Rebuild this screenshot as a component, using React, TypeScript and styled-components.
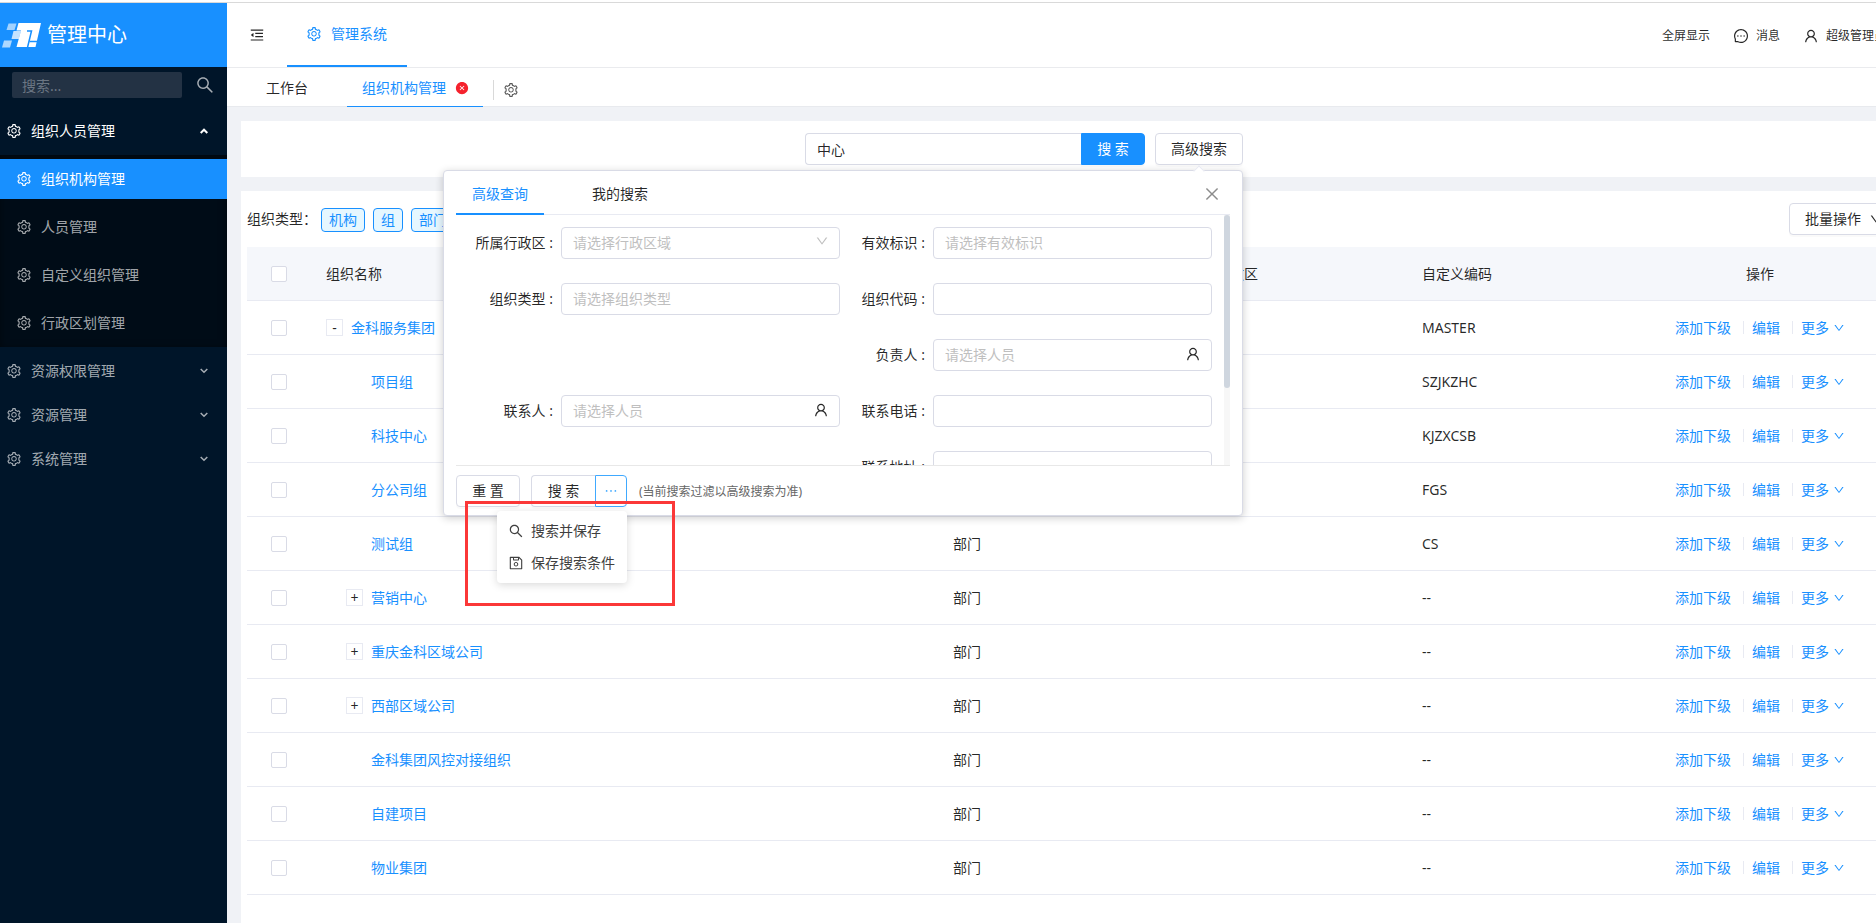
import React from "react";
import styled, { createGlobalStyle, css } from "styled-components";
import {
  AiFillCloseCircle,
  AiOutlineClose,
  AiOutlineDown,
  AiOutlineEllipsis,
  AiOutlineMenuFold,
  AiOutlineMessage,
  AiOutlineSave,
  AiOutlineSearch,
  AiOutlineSetting,
  AiOutlineUser,
} from "react-icons/ai";

const blue = "#1890ff";
const line = "#e8eaf2";
const fieldBorder = "#d9dbe6";

const GlobalStyle = createGlobalStyle`
  *, *::before, *::after { box-sizing: border-box; }
  body {
    margin: 0;
    background: #fff;
    color: rgba(0, 0, 0, 0.85);
    font: 14px/22px "Noto Sans", "Noto Sans CJK SC", sans-serif;
  }
  button, input, select { font: inherit; color: inherit; margin: 0; }
  button { cursor: pointer; }
  a { color: ${blue}; text-decoration: none; }
  svg { display: block; flex: none; }
`;

const Viewport = styled.div`
  overflow: hidden;
`;

const Shell = styled.div`
  display: flex;
  width: calc(100% + 38px);
  min-height: 100vh;
  padding-top: 2px;
`;

/* ---------- sidebar ---------- */

const Sidebar = styled.aside`
  flex: none;
  width: 227px;
  border-top: 1px solid #d9d9d9;
  background: #001529;
  color: rgba(255, 255, 255, 0.65);
`;

const Brand = styled.div`
  display: flex;
  align-items: center;
  gap: 6px;
  height: 64px;
  padding-left: 2px;
  background: ${blue};
  color: #fff;
  font-size: 20px;
  line-height: 64px;
`;

const SideSearch = styled.form`
  display: flex;
  align-items: center;
  gap: 13px;
  height: 40px;
  padding: 0 12px 4px;
`;

const SideInput = styled.input`
  width: 170px;
  height: 26px;
  padding: 0 10px;
  border: 0;
  border-radius: 2px;
  background: #233244;
  outline: 0;
  &::placeholder { color: #6b7683; opacity: 1; }
`;

const IconButton = styled.button`
  display: flex;
  align-items: center;
  padding: 0;
  border: 0;
  background: none;
  color: inherit;
`;

const NavItem = styled.button<{ $nested?: boolean; $active?: boolean; $open?: boolean }>`
  display: flex;
  align-items: center;
  gap: 9px;
  width: 100%;
  height: 40px;
  margin: 4px 0;
  padding: 0 19px 0 ${(p) => (p.$nested ? 16 : 6)}px;
  border: 0;
  background: ${(p) => (p.$active ? blue : "transparent")};
  color: ${(p) => (p.$active || p.$open ? "#fff" : "inherit")};
  text-align: left;
  & > span { flex: 1; }
`;

const NavList = styled.nav`
  display: flex;
  flex-direction: column;
  & > ${NavItem} + ${NavItem} { margin-top: 0; }
`;

const SubMenu = styled.div`
  display: flex;
  flex-direction: column;
  background: #000c17;
  box-shadow: inset 0 2px 8px rgba(0, 0, 0, 0.45);
`;

/* ---------- header ---------- */

const Main = styled.main`
  flex: 1;
  min-width: 0;
  display: flex;
  flex-direction: column;
  border-top: 1px solid #d9d9d9;
  background: #f0f2f6;
`;

const Header = styled.header`
  display: flex;
  height: 65px;
  padding: 0 28px 0 22px;
  border-bottom: 1px solid #eaebee;
  background: #fff;
`;

const AppTab = styled.button`
  display: flex;
  align-items: center;
  gap: 9px;
  width: 120px;
  height: 64px;
  margin-left: 22px;
  padding: 0 19px;
  border: 0;
  border-bottom: 2px solid ${blue};
  background: none;
  color: ${blue};
  white-space: nowrap;
`;

const HeaderTools = styled.div`
  display: flex;
  align-items: center;
  gap: 23px;
  margin-left: auto;
  font-size: 12px;
`;

const HeaderTool = styled.button`
  display: flex;
  align-items: center;
  gap: 7px;
  padding: 2px 0 0;
  border: 0;
  background: none;
`;

const PageTabs = styled.div`
  display: flex;
  height: 39px;
  padding-left: 24px;
  border-bottom: 1px solid #e8eaee;
  background: #fff;
`;

const PageTab = styled.button<{ $active?: boolean }>`
  display: flex;
  align-items: center;
  gap: 9px;
  height: 39px;
  padding: 2px 14px 0 15px;
  border: 0;
  border-bottom: 1px solid ${(p) => (p.$active ? blue : "transparent")};
  background: none;
  color: ${(p) => (p.$active ? blue : "inherit")};
  svg { color: #f5222d; }
  & + & { margin-left: 25px; }
`;

const TabSettings = styled(IconButton)`
  height: 20px;
  margin: 12px 0 0 10px;
  padding-left: 9px;
  border-left: 1px solid #d9d9d9;
  color: #595959;
`;

const Content = styled.div`
  flex: 1;
  display: flex;
  flex-direction: column;
  gap: 14px;
  padding: 14px 9px 0 14px;
`;

/* ---------- buttons and fields ---------- */

const Button = styled.button<{ $primary?: boolean; $join?: "left" | "right"; $focus?: boolean }>`
  display: flex;
  align-items: center;
  justify-content: center;
  gap: 8px;
  min-width: 64px;
  height: 32px;
  padding: 0 15px;
  border: 1px solid ${fieldBorder};
  border-radius: 4px;
  background: #fff;
  white-space: nowrap;
  box-shadow: 0 2px 0 rgba(0, 0, 0, 0.02);
  ${(p) => p.$primary && css`background: ${blue}; border-color: ${blue}; color: #fff;`}
  ${(p) => p.$join === "right" && css`border-radius: 0 4px 4px 0;`}
  ${(p) => p.$join === "left" && css`border-radius: 4px 0 0 4px; border-right: 0;`}
  ${(p) => p.$focus && css`min-width: 32px; padding: 0; border-color: #40a9ff; color: #40a9ff;`}
`;

const fieldBox = css`
  width: 100%;
  height: 32px;
  padding: 0 11px;
  border: 1px solid ${fieldBorder};
  border-radius: 4px;
  background: #fff;
  outline: 0;
`;

const TextInput = styled.input<{ $joined?: boolean }>`
  ${fieldBox}
  ${(p) =>
    p.$joined
      ? css`width: 276px; border-radius: 4px 0 0 4px; border-right: 0;`
      : css`padding-bottom: 2px;`}
  &::placeholder { color: #bfbfbf; opacity: 1; }
`;

const SelectInput = styled.select`
  ${fieldBox}
  appearance: none;
  color: #bfbfbf;
`;

/* ---------- search card ---------- */

const SearchCard = styled.section`
  display: grid;
  grid-template-columns: 564fr auto 662fr;
  height: 56px;
  padding: 12px 0;
  background: #fff;
`;

const SearchForm = styled.div`
  grid-column: 2;
  display: flex;
`;

const AdvancedAnchor = styled.div`
  position: relative;
  z-index: 2;
  margin-left: 10px;
`;

const Popover = styled.div`
  position: absolute;
  top: 37px;
  right: 0;
  width: 800px;
  padding: 0 12px 8px;
  border: 1px solid ${fieldBorder};
  border-radius: 4px;
  background: #fff;
  box-shadow: 0 2px 8px rgba(0, 0, 0, 0.2);
  &::before {
    content: "";
    position: absolute;
    top: -4px;
    right: 39px;
    width: 8px;
    height: 8px;
    border: 1px solid ${line};
    border-width: 1px 0 0 1px;
    background: #fff;
    transform: rotate(45deg);
  }
`;

const PopTabs = styled.div`
  display: flex;
  align-items: center;
  gap: 32px;
  height: 44px;
  border-bottom: 1px solid ${line};
  ${IconButton} { margin: 2px 9px 0 auto; color: #8c8c8c; }
`;

const PopTab = styled.button<{ $active?: boolean }>`
  height: 44px;
  padding: 4px 16px 0;
  border: 0;
  border-bottom: 2px solid ${(p) => (p.$active ? blue : "transparent")};
  background: none;
  color: ${(p) => (p.$active ? blue : "inherit")};
`;

const ScrollArea = styled.div`
  display: flex;
  height: 251px;
  overflow: hidden;
  border-bottom: 1px solid #e8e8e8;
`;

const FormGrid = styled.div`
  flex: 1;
  display: grid;
  grid-template-columns: 1fr 1fr;
  grid-auto-rows: 32px;
  row-gap: 24px;
  padding: 12px 12px 0;
`;

const Field = styled.div<{ $second?: boolean }>`
  display: grid;
  grid-template-columns: 1fr 3fr;
  align-items: center;
  grid-column: ${(p) => (p.$second ? 2 : 1)};
  label {
    justify-self: end;
    padding-right: 8px;
    white-space: nowrap;
  }
`;

const Control = styled.div`
  position: relative;
  & > svg {
    position: absolute;
    top: 7px;
    right: 11px;
    pointer-events: none;
  }
`;

const ScrollTrack = styled.div`
  width: 6px;
  background: #f7f7f7;
`;

const ScrollThumb = styled.div`
  height: 173px;
  border-radius: 3px;
  background: #cfd6df;
`;

const PopFooter = styled.div`
  display: flex;
  align-items: center;
  padding-top: 9px;
`;

const Split = styled.div`
  position: relative;
  display: flex;
  margin: 0 12px 0 11px;
`;

const Hint = styled.span`
  padding-top: 2px;
  color: #666;
  font-size: 12px;
`;

const Menu = styled.div`
  position: absolute;
  top: 36px;
  right: 0;
  width: 130px;
  padding: 4px 0;
  border-radius: 4px;
  background: #fff;
  box-shadow: 0 2px 8px rgba(0, 0, 0, 0.15);
`;

const MenuItem = styled.button`
  display: flex;
  align-items: center;
  gap: 7px;
  width: 100%;
  height: 32px;
  padding: 0 11px;
  border: 0;
  background: none;
  color: #404040;
  white-space: nowrap;
`;

const Highlight = styled.div`
  position: absolute;
  top: 26px;
  left: -66px;
  width: 210px;
  height: 105px;
  border: 3px solid #fb3838;
  pointer-events: none;
`;

/* ---------- table card ---------- */

const TableCard = styled.section`
  flex: 1;
  padding: 0 6px 28px;
  background: #fff;
`;

const Toolbar = styled.div`
  display: flex;
  align-items: center;
  gap: 8px;
  height: 56px;
  ${Button} { margin-left: auto; }
`;

const ToolbarLabel = styled.span`
  width: 66px;
  white-space: nowrap;
`;

const Tag = styled.button`
  height: 24px;
  margin-top: 2px;
  padding: 0 7px;
  border: 1px solid ${blue};
  border-radius: 4px;
  background: #e6f7ff;
  color: ${blue};
  line-height: 22px;
`;

const Table = styled.table`
  width: 100%;
  table-layout: fixed;
  border-collapse: separate;
  border-spacing: 0;
  th, td {
    height: 54px;
    padding: 0 16px;
    border-bottom: 1px solid ${line};
    font-weight: 400;
    text-align: left;
  }
  th { background: #f5f7fb; }
  th:first-child, td:first-child { padding-left: 24px; }
  th:last-child, td:last-child { padding: 0 28px 0 8px; text-align: center; }
`;

const Check = styled.input`
  display: block;
  appearance: none;
  width: 16px;
  height: 16px;
  margin: 0;
  border: 1px solid ${fieldBorder};
  border-radius: 2px;
  background: #fff;
`;

const NameCell = styled.div<{ $level: number }>`
  display: flex;
  align-items: center;
  gap: 8px;
  padding-left: ${(p) => p.$level * 20}px;
`;

const Expander = styled.button`
  width: 17px;
  height: 17px;
  padding: 0;
  border: 1px solid ${line};
  background: #fff;
  line-height: 14px;
`;

const ExpanderGap = styled.span`
  width: 17px;
`;

const Actions = styled.div`
  display: flex;
  align-items: center;
  justify-content: center;
  a { display: flex; align-items: center; gap: 4px; white-space: nowrap; }
  a + a { margin-left: 12px; padding-left: 8px; }
  a + a::before {
    content: "";
    width: 1px;
    height: 13px;
    margin: 0 4px 0 -8px;
    background: ${line};
  }
`;

function Logo() {
  return (
    <svg width="39" height="25" viewBox="0 0 39 25" aria-hidden="true">
      <g fill="#fff">
        <path opacity=".6" d="M6.500 .5h8L12.500 7h-8z" />
        <path opacity=".75" d="M11.500 8h7.500l-2.200 8H9.500z" />
        <path opacity=".65" d="M2 17.500h8L8 24.500H0z" />
        <path d="M16.500 0H39L33.500 24H14.500L19 7.500H14.500z" />
      </g>
      <g fill="none" stroke={blue}>
        <path strokeWidth="1.500" d="M25 8h4.500L25.500 24.500" />
        <path strokeWidth="1.500" d="M27.500 18.500H36" />
      </g>
    </svg>
  );
}

function Arrow({ up }: { up?: boolean }) {
  return (
    <svg
      width="8"
      height="6"
      viewBox="0 0 8 6"
      fill="none"
      stroke="currentColor"
      strokeWidth={up ? 2 : 1.5}
      aria-hidden="true"
    >
      <path d={up ? "M.7 5 4 1.700 7.300 5" : "M.7 1 4 4.300 7.300 1"} />
    </svg>
  );
}

type Row = { name: string; code: string; level: number; toggle?: string };

const rows: Row[] = [
  { name: "金科服务集团", code: "MASTER", level: 0, toggle: "-" },
  { name: "项目组", code: "SZJKZHC", level: 1 },
  { name: "科技中心", code: "KJZXCSB", level: 1 },
  { name: "分公司组", code: "FGS", level: 1 },
  { name: "测试组", code: "CS", level: 1 },
  { name: "营销中心", code: "--", level: 1, toggle: "+" },
  { name: "重庆金科区域公司", code: "--", level: 1, toggle: "+" },
  { name: "西部区域公司", code: "--", level: 1, toggle: "+" },
  { name: "金科集团风控对接组织", code: "--", level: 1 },
  { name: "自建项目", code: "--", level: 1 },
  { name: "物业集团", code: "--", level: 1 },
];

type FieldSpec = {
  id: string;
  label: string;
  placeholder?: string;
  kind?: "select" | "person";
  second?: boolean;
};

const fields: FieldSpec[] = [
  { id: "region", label: "所属行政区", placeholder: "请选择行政区域", kind: "select" },
  { id: "valid", label: "有效标识", placeholder: "请选择有效标识", second: true },
  { id: "type", label: "组织类型", placeholder: "请选择组织类型" },
  { id: "code", label: "组织代码", second: true },
  { id: "leader", label: "负责人", placeholder: "请选择人员", kind: "person", second: true },
  { id: "contact", label: "联系人", placeholder: "请选择人员", kind: "person" },
  { id: "phone", label: "联系电话", second: true },
  { id: "address", label: "联系地址", second: true },
];

function FormField({ id, label, placeholder, kind, second }: FieldSpec) {
  return (
    <Field $second={second}>
      <label htmlFor={id}>{label} :</label>
      <Control>
        {kind === "select" ? (
          <SelectInput id={id}>
            <option>{placeholder}</option>
          </SelectInput>
        ) : (
          <TextInput id={id} placeholder={placeholder} />
        )}
        {kind === "select" && <AiOutlineDown size={14} color="#bfbfbf" />}
        {kind === "person" && <AiOutlineUser size={16} />}
      </Control>
    </Field>
  );
}

function AdvancedSearch() {
  return (
    <Popover>
      <PopTabs>
        <PopTab $active>高级查询</PopTab>
        <PopTab>我的搜索</PopTab>
        <IconButton aria-label="关闭">
          <AiOutlineClose size={18} />
        </IconButton>
      </PopTabs>
      <ScrollArea>
        <FormGrid>
          {fields.map((f) => (
            <FormField key={f.id} {...f} />
          ))}
        </FormGrid>
        <ScrollTrack>
          <ScrollThumb />
        </ScrollTrack>
      </ScrollArea>
      <PopFooter>
        <Button>重 置</Button>
        <Split>
          <Button $join="left">搜 索</Button>
          <Button $join="right" $focus aria-label="更多搜索操作">
            <AiOutlineEllipsis size={16} />
          </Button>
          <Menu>
            <MenuItem>
              <AiOutlineSearch size={16} />
              搜索并保存
            </MenuItem>
            <MenuItem>
              <AiOutlineSave size={16} />
              保存搜索条件
            </MenuItem>
          </Menu>
          <Highlight />
        </Split>
        <Hint>(当前搜索过滤以高级搜索为准)</Hint>
      </PopFooter>
    </Popover>
  );
}

export default function App() {
  return (
    <Viewport>
      <GlobalStyle />
      <Shell>
        <Sidebar>
          <Brand>
            <Logo />
            管理中心
          </Brand>
          <SideSearch>
            <SideInput placeholder="搜索..." aria-label="搜索" />
            <IconButton type="button" aria-label="搜索">
              <AiOutlineSearch size={20} />
            </IconButton>
          </SideSearch>
          <NavList>
            <NavItem $open>
              <AiOutlineSetting size={16} />
              <span>组织人员管理</span>
              <Arrow up />
            </NavItem>
            <SubMenu>
              {["组织机构管理", "人员管理", "自定义组织管理", "行政区划管理"].map((t, i) => (
                <NavItem key={t} $nested $active={i === 0}>
                  <AiOutlineSetting size={16} />
                  <span>{t}</span>
                </NavItem>
              ))}
            </SubMenu>
            {["资源权限管理", "资源管理", "系统管理"].map((t) => (
              <NavItem key={t}>
                <AiOutlineSetting size={16} />
                <span>{t}</span>
                <Arrow />
              </NavItem>
            ))}
          </NavList>
        </Sidebar>
        <Main>
          <Header>
            <IconButton aria-label="收起菜单">
              <AiOutlineMenuFold size={16} />
            </IconButton>
            <AppTab>
              <AiOutlineSetting size={16} />
              管理系统
            </AppTab>
            <HeaderTools>
              <HeaderTool>全屏显示</HeaderTool>
              <HeaderTool>
                <AiOutlineMessage size={16} />
                消息
              </HeaderTool>
              <HeaderTool>
                <AiOutlineUser size={16} />
                超级管理员
              </HeaderTool>
            </HeaderTools>
          </Header>
          <PageTabs>
            <PageTab>工作台</PageTab>
            <PageTab $active>
              组织机构管理
              <AiFillCloseCircle size={14} />
            </PageTab>
            <TabSettings aria-label="页签设置">
              <AiOutlineSetting size={16} />
            </TabSettings>
          </PageTabs>
          <Content>
            <SearchCard>
              <SearchForm>
                <TextInput $joined defaultValue="中心" aria-label="搜索组织" />
                <Button $primary $join="right">
                  搜 索
                </Button>
                <AdvancedAnchor>
                  <Button>高级搜索</Button>
                  <AdvancedSearch />
                </AdvancedAnchor>
              </SearchForm>
            </SearchCard>
            <TableCard>
              <Toolbar>
                <ToolbarLabel>组织类型：</ToolbarLabel>
                <Tag>机构</Tag>
                <Tag>组</Tag>
                <Tag>部门</Tag>
                <Button>
                  批量操作
                  <AiOutlineDown size={14} />
                </Button>
              </Toolbar>
              <Table>
                <colgroup>
                  <col width="63" />
                  <col />
                  <col width="235" />
                  <col width="234" />
                  <col width="235" />
                  <col width="258" />
                </colgroup>
                <thead>
                  <tr>
                    <th>
                      <Check type="checkbox" aria-label="全选" />
                    </th>
                    <th>组织名称</th>
                    <th>组织类型</th>
                    <th>所属行政区</th>
                    <th>自定义编码</th>
                    <th>操作</th>
                  </tr>
                </thead>
                <tbody>
                  {rows.map((r) => (
                    <tr key={r.name}>
                      <td>
                        <Check type="checkbox" aria-label={r.name} />
                      </td>
                      <td>
                        <NameCell $level={r.level}>
                          {r.toggle ? <Expander>{r.toggle}</Expander> : <ExpanderGap />}
                          <a href="#org">{r.name}</a>
                        </NameCell>
                      </td>
                      <td>部门</td>
                      <td />
                      <td>{r.code}</td>
                      <td>
                        <Actions>
                          <a href="#add">添加下级</a>
                          <a href="#edit">编辑</a>
                          <a href="#more">
                            更多
                            <AiOutlineDown size={12} />
                          </a>
                        </Actions>
                      </td>
                    </tr>
                  ))}
                </tbody>
              </Table>
            </TableCard>
          </Content>
        </Main>
      </Shell>
    </Viewport>
  );
}
